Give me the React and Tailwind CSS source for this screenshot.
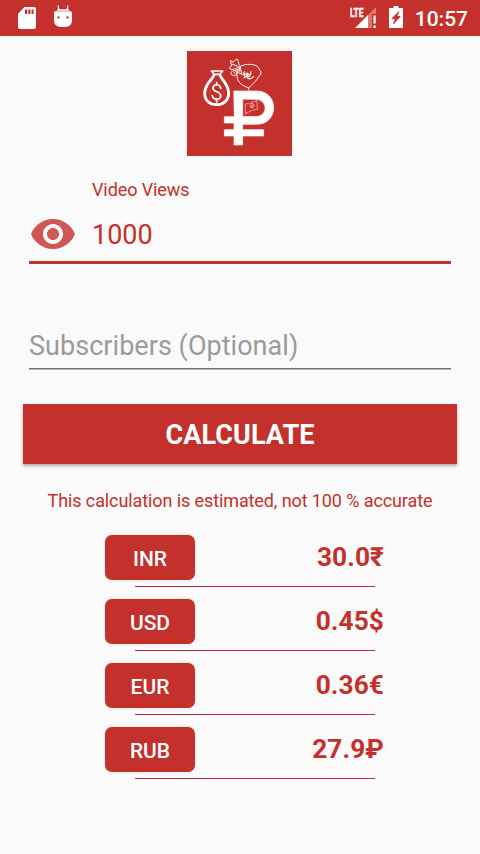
const rates = [
  { code: "INR", value: "30.0₹" },
  { code: "USD", value: "0.45$" },
  { code: "EUR", value: "0.36€" },
  { code: "RUB", value: "27.9₽" },
];

function SdCard() {
  return (
    <svg className="h-[23px] w-[18px]" viewBox="0 0 18 23" fill="#fff">
      <path fillRule="evenodd" d="M6.500 0H16q2 0 2 2V20q0 2-2 2H2q-2 0-2-2V6.700ZM7 2.500V7h2.200V2.500ZM10.300 2.500V7h2.200V2.500ZM13.600 2.500V7h2V2.500Z" />
    </svg>
  );
}

function DroidHead() {
  return (
    <svg className="h-[23px] w-[18px]" viewBox="0 0 18 23" fill="#fff">
      <path d="M4 0.500 5 5M14 0.500 13 5" stroke="#fff" strokeWidth="1.200" />
      <path d="M3 4H15V8H3Z" fillOpacity=".75" />
      <path fillRule="evenodd" d="M0 8q0-2 3-2v1.500h12V6q3 0 3 2v7q0 7-7 7H7q-7 0-7-7ZM4.500 11.200a1.200 1.200 0 1 0 .01 0ZM13.500 11.200a1.200 1.200 0 1 0 .01 0Z" />
    </svg>
  );
}

function Signal() {
  return (
    <svg className="h-[24px] w-[28px]" viewBox="0 0 28 24">
      <path d="M26 1V8H22V22H18V9Z" fill="#fff" fillOpacity=".35" />
      <path d="M18 9V22H5Z" fill="#fff" />
      <path d="M23.500 9.500h2.200v8h-2.200ZM23.500 19.500h2.200v2.500h-2.200Z" fill="#fff" />
      <text x="0" y="10.500" fill="#fff" stroke="#fff" strokeWidth=".3" fontFamily="Roboto, sans-serif" fontSize="12.500" fontWeight="700" textLength="13.500" lengthAdjust="spacingAndGlyphs">LTE</text>
    </svg>
  );
}

function Battery() {
  return (
    <svg className="h-[22px] w-[14px]" viewBox="0 0 14 22">
      <path d="M4.500 0h5v2H13q1 0 1 1V21q0 1-1 1H1q-1 0-1-1V3q0-1 1-1H4.500Z" fill="#fff" />
      <path d="M9.800 5.500 2.800 12.800H6.400L4.500 18 11.200 10.500H7.800Z" fill="#c4302b" stroke="#c4302b" strokeWidth=".8" />
    </svg>
  );
}

function Logo() {
  return (
    <svg className="size-[105px] bg-[#c4302b]" viewBox="21 21 315 315" fill="none" stroke="#fff" strokeLinejoin="round" strokeLinecap="round">
      <path d="M94 81 103 91 119 91 128 81Z" strokeWidth="5" />
      <path d="M102 93C98 108 74 118 74 148C74 170 90 182 110 182S146 169 146 148C146 119 124 108 120 93" strokeWidth="8.500" />
      <path d="M110 114 134 146 110 176 88 146Z" strokeWidth="1" strokeOpacity=".4" />
      <path d="M122 133C120 119 99 119 99 132C99 147 122 140 122 155C122 169 99 169 97 155M110 116V124M110 165V174" strokeWidth="5" />
      <path d="M180 68C188 61 216 57 232 67 239 72 236 79 243 82L242 93 235 98C230 112 217 120 206 132 202 138 207 139 207 139M206 132C192 126 173 120 171 96C170 82 173 77 181 68" strokeWidth="3" />
      <path d="M177 62C176 55 175 48 171 45 166 45 164 52 160 54L151 50C151 58 157 62 154 66L148 72C151 79 160 75 166 75L178 67M155 60 172 66M180 66 185 91 176 86 180 72M174 76C165 82 153 78 153 88 156 98 170 97 172 86 168 80 163 83 163 88" strokeWidth="3" />
      <path d="M193 83C189 90 194 99 202 99 209 99 213 91 213 83M189 92 204 88M192 101 208 91M202 87C198 100 205 112 221 98" strokeWidth="3.500" />
      <path d="M162 141H230C298 141 298 241 230 241H188V257H251V276H188V303H162V276H133V257H162V237H133V218H162ZM188 166V218H226C265 218 265 166 226 166Z" fill="#fff" fillRule="evenodd" stroke="#fff" strokeWidth="2" />
      <path d="M188 218H251V237H188Z" fill="#fff" stroke="none" />
      <path d="M197 180C209 182 217 171 231 170L232 196C217 195 211 204 197 207ZM215 178C207 184 211 194 219 190 225 184 222 179 215 178M212 191 217 182 220 188M197 212 200 207" strokeWidth="1.500" />
    </svg>
  );
}

function Eye() {
  return (
    <svg className="h-[30px] w-[44px]" viewBox="1 4.500 22 15" fill="#c4302b" fillOpacity=".8">
      <path d="M12 4.500C7 4.500 2.730 7.610 1 12c1.730 4.390 6 7.500 11 7.500s9.270-3.110 11-7.500c-1.730-4.390-6-7.500-11-7.500zM12 17c-2.760 0-5-2.240-5-5s2.240-5 5-5 5 2.240 5 5-2.240 5-5 5zm0-8c-1.660 0-3 1.340-3 3s1.340 3 3 3 3-1.340 3-3-1.340-3-3-3z" />
    </svg>
  );
}

export default function App() {
  return (
    <div className="flex h-[854px] w-[480px] flex-col overflow-hidden bg-[#fafafa] font-[Roboto,sans-serif] text-[#c4302b]">
      <header className="flex h-9 shrink-0 items-start bg-[#c4302b] text-white">
        <div className="flex gap-[18px] pt-[7px] pl-[18px]">
          <SdCard />
          <div className="-mt-[2px]"><DroidHead /></div>
        </div>
        <div className="ml-auto flex items-start pr-[12px]">
          <div className="mt-[6px] mr-[11px]"><Signal /></div>
          <div className="mt-[6px] mr-[12px]"><Battery /></div>
          <span className="mt-[7px] text-[21px] leading-6 font-medium">10:57</span>
        </div>
      </header>

      <main className="flex flex-col">
        <div className="mt-[15px] ml-[187px] flex"><Logo /></div>

        <section className="mx-[29px] mt-6 border-b-[3px] border-[#c4302b]">
          <label className="block pl-[63px] text-[18px] leading-5 tracking-[-0.1px]">Video Views</label>
          <div className="mt-[19px] flex h-[42px] pl-[2px]">
            <Eye />
            <span className="pl-[17px] text-[27px] leading-8">1000</span>
          </div>
        </section>

        <section className="mx-[29px] mt-[66px] h-[40px] text-[27px] leading-8 tracking-[0.04px] text-[#9b9b9b]">
          <div className="h-[38px]">Subscribers (Optional)</div>
          <div className="h-px bg-[#747474]" />
          <div className="h-px bg-[#b4b4b4]" />
        </section>

        <button className="mx-[23px] mt-[34px] h-[60px] bg-[#c4302b] pt-[2px] text-[27px] font-bold tracking-[0.1px] text-white shadow-[0_2px_3px_rgba(0,0,0,0.3)]">
          CALCULATE
        </button>

        <p className="mt-[27px] text-center text-[18px] leading-5 tracking-[-0.1px]">
          This calculation is estimated, not 100 % accurate
        </p>

        <ul className="mt-6 flex flex-col gap-3">
          {rates.map((rate) => (
            <li key={rate.code} className="flex h-[52px] flex-col">
              <div className="flex h-[45px] items-center justify-between pr-[96px] pl-[105px]">
                <span className="flex h-[45px] w-[90px] items-center justify-center rounded-[7px] bg-[#c4302b] pt-[2px] text-[21px] leading-6 font-medium text-white shadow-[0_0_2px_rgba(0,0,0,0.2)]">
                  {rate.code}
                </span>
                <span className="pb-[2px] text-[26.25px] leading-8 font-bold tracking-[0.1px]">{rate.value}</span>
              </div>
              <div className="mt-[6px] ml-[135px] h-px w-[240px] bg-[#b12c3c]" />
            </li>
          ))}
        </ul>
      </main>
    </div>
  );
}
